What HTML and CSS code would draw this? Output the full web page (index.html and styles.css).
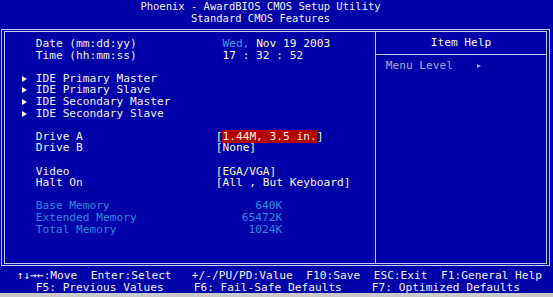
FILE: index.html
```html
<!DOCTYPE html>
<html lang="en">
<head>
  <meta charset="UTF-8" />
  <meta name="viewport" content="width=device-width, initial-scale=1.0"/>
  <title>Standard CMOS Features</title>
  <link rel="stylesheet" href="styles.css">
</head>
<body>
  <header class="title">
    <div>Phoenix - AwardBIOS CMOS Setup Utility</div>
    <div>Standard CMOS Features</div>
  </header>

  <div class="frame">
    <div class="panel">
      <section class="items">
        <div class="group">
          <div class="row"><span class="label">Date (mm:dd:yy)</span><span class="value"> <span class="day">Wed,</span> Nov 19 2003</span></div>
          <div class="row"><span class="label">Time (hh:mm:ss)</span><span class="value"> 17 : 32 : 52</span></div>
        </div>
        <div class="group">
          <div class="row sub"><span class="label">IDE Primary Master</span></div>
          <div class="row sub"><span class="label">IDE Primary Slave</span></div>
          <div class="row sub"><span class="label">IDE Secondary Master</span></div>
          <div class="row sub"><span class="label">IDE Secondary Slave</span></div>
        </div>
        <div class="group">
          <div class="row"><span class="label">Drive A</span><span class="value">[<span class="hl">1.44M, 3.5 in.</span>]</span></div>
          <div class="row"><span class="label">Drive B</span><span class="value">[None]</span></div>
        </div>
        <div class="group">
          <div class="row"><span class="label">Video</span><span class="value">[EGA/VGA]</span></div>
          <div class="row"><span class="label">Halt On</span><span class="value">[All , But Keyboard]</span></div>
        </div>
        <div class="group memory">
          <div class="row"><span class="label">Base Memory</span><span class="num">640K</span></div>
          <div class="row"><span class="label">Extended Memory</span><span class="num">65472K</span></div>
          <div class="row"><span class="label">Total Memory</span><span class="num">1024K</span></div>
        </div>
      </section>

      <aside class="help">
        <div class="help-title">Item Help</div>
        <div class="help-body">Menu Level<span class="level-arrow"></span></div>
      </aside>
    </div>
  </div>

  <footer class="keys">
    <div class="keys-line">↑↓→←:Move  Enter:Select   +/-/PU/PD:Value  F10:Save  ESC:Exit  F1:General Help</div>
    <div class="keys-line keys-fn">
      <span>F5: Previous Values</span>
      <span>F6: Fail-Safe Defaults</span>
      <span>F7: Optimized Defaults</span>
    </div>
  </footer>
  <div class="edge"></div>
</body>
</html>
```

FILE: styles.css
```css
* {
  box-sizing: border-box;
  margin: 0;
  padding: 0;
}

html,
body {
  height: 297px;
  overflow: hidden;
}

body {
  background: #0000a8;
  color: #f0f0f0;
  font-family: "DejaVu Sans Mono", "Liberation Mono", monospace;
  font-size: 11.2px;
  line-height: 11.6px;
}

/* Title lines */
.title {
  padding: 1.4px 32px 0 0;
  text-align: center;
  font-size: 10.5px;
  line-height: 11.8px;
  height: 29px;
}

/* Double line box */
.frame {
  margin-left: 1px;
  width: 549px;
  border: 1px solid #c4c4f0;
  padding: 1px 2px;
}

.panel {
  height: 233px;
  border: 1px solid #c4c4f0;
  display: grid;
  grid-template-columns: 371px 1fr;
}

.items {
  border-right: 1px solid #c4c4f0;
  padding: 6px 0 0 30.7px;
}

.group {
  margin-bottom: 11.6px;
}

.row {
  display: grid;
  grid-template-columns: 180px auto;
  white-space: pre;
}

.value {
  color: #f8f8d4;
}

.day {
  color: #3c9af0;
}

.hl {
  background: #b40000;
  color: #f8f0e8;
}

.sub .label {
  margin-left: -13.7px;
}

.sub .label::before {
  content: "";
  display: inline-block;
  vertical-align: middle;
  border-left: 5px solid #f0f0f0;
  border-top: 3px solid transparent;
  border-bottom: 3px solid transparent;
  margin-right: 8.7px;
}

.memory {
  color: #2a8ae0;
}

.num {
  display: block;
  width: 66.5px;
  text-align: right;
}

/* Item help column */
.help-title {
  height: 23px;
  padding-top: 5.4px;
  text-align: center;
  border-bottom: 1px solid #c4c4f0;
}

.help-body {
  padding: 5.4px 0 0 9.7px;
  color: #a8a8dc;
}

.level-arrow {
  display: inline-block;
  vertical-align: middle;
  margin-left: 24px;
  border-left: 4px solid #a8a8dc;
  border-top: 2.5px solid transparent;
  border-bottom: 2.5px solid transparent;
}

/* Key legend */
.keys {
  margin-top: 4.4px;
  line-height: 11.5px;
}

.keys-line {
  padding-left: 16.7px;
  white-space: pre;
}

.keys-fn {
  display: flex;
  gap: 30px;
  padding-left: 35.7px;
}

.edge {
  height: 4px;
  background: #c8c8c8;
}
```
